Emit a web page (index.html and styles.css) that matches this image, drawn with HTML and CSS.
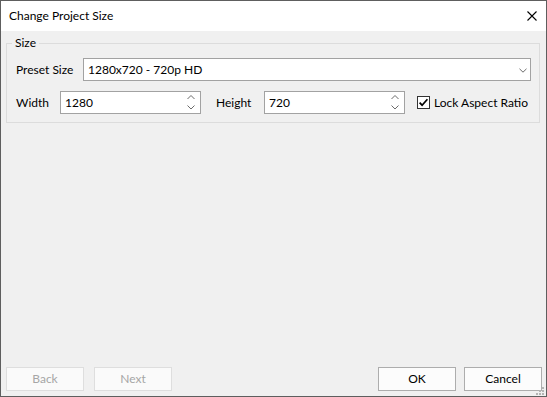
FILE: index.html
```html
<!DOCTYPE html>
<html lang="en">
<head>
<meta charset="utf-8">
<title>Change Project Size</title>
<link rel="stylesheet" href="styles.css">
</head>
<body>
<div class="window">
  <div class="titlebar">
    <span class="title">Change Project Size</span>
    <svg class="close" width="10" height="10" viewBox="0 0 10 10"><path d="M0.5 0.5 L9.5 9.5 M9.5 0.5 L0.5 9.5" stroke="#000" stroke-width="1.1" fill="none"/></svg>
  </div>
  <div class="content">
    <fieldset class="group">
      <legend class="legend">Size</legend>
      <div class="row">
        <span class="label label-preset">Preset Size</span>
        <div class="combo">
          <span class="field-text">1280x720 - 720p HD</span>
          <svg class="combo-arrow" width="8" height="5" viewBox="0 0 8 5"><path d="M0.5 0.8 L4 4.2 L7.5 0.8" stroke="#6b6b6b" stroke-width="1" fill="none"/></svg>
        </div>
      </div>
      <div class="row row-size">
        <span class="label label-width">Width</span>
        <div class="spin">
          <span class="field-text">1280</span>
          <svg class="spin-arrows" width="8" height="21" viewBox="0 0 8 21"><path d="M0.5 7 L4 3.5 L7.5 7 M0.5 13.5 L4 17 L7.5 13.5" stroke="#6b6b6b" stroke-width="1" fill="none"/></svg>
        </div>
        <span class="label label-height">Height</span>
        <div class="spin">
          <span class="field-text">720</span>
          <svg class="spin-arrows" width="8" height="21" viewBox="0 0 8 21"><path d="M0.5 7 L4 3.5 L7.5 7 M0.5 13.5 L4 17 L7.5 13.5" stroke="#6b6b6b" stroke-width="1" fill="none"/></svg>
        </div>
        <span class="checkbox">
          <svg width="11" height="11" viewBox="0 0 11 11"><path d="M1.6 5.6 L4.1 8.2 L9.4 2.2" stroke="#000" stroke-width="1.7" fill="none"/></svg>
        </span>
        <span class="check-label">Lock Aspect Ratio</span>
      </div>
    </fieldset>
    <div class="buttons">
      <div class="btn disabled">Back</div>
      <div class="btn disabled btn-next">Next</div>
      <div class="spacer"></div>
      <div class="btn">OK</div>
      <div class="btn btn-cancel">Cancel</div>
    </div>
    <svg class="grip" width="9" height="9" viewBox="0 0 9 9" fill="#b4b4b4">
      <rect x="6" y="0" width="2" height="2"/>
      <rect x="3" y="3" width="2" height="2"/><rect x="6" y="3" width="2" height="2"/>
      <rect x="0" y="6" width="2" height="2"/><rect x="3" y="6" width="2" height="2"/><rect x="6" y="6" width="2" height="2"/>
    </svg>
  </div>
</div>
</body>
</html>
```

FILE: styles.css
```css
* { box-sizing: border-box; }

html, body {
  margin: 0;
  padding: 0;
  background: #f0f0f0;
}

body {
  font-family: Lato, "Noto Sans", "Liberation Sans", sans-serif;
  font-size: 12px;
  color: #000;
}

.window {
  width: 547px;
  height: 397px;
  border: 1px solid #5e5e5e;
  display: flex;
  flex-direction: column;
  background: #f0f0f0;
}

.titlebar {
  height: 30px;
  flex: 0 0 30px;
  background: #fff;
  display: flex;
  align-items: center;
  justify-content: space-between;
  padding: 0 9px 0 8px;
}

.title {
  line-height: 16px;
}

.close {
  display: block;
}

.content {
  flex: 1;
  display: flex;
  flex-direction: column;
  position: relative;
}

.group {
  margin: 4px 6px 0 5px;
  border: 1px solid #dcdcdc;
  padding: 7px 8px 8px 9px;
  min-width: 0;
}

.legend {
  padding: 0 3px;
  margin-left: -4px;
  line-height: 16px;
}

.row {
  display: flex;
  align-items: center;
}

.row-size {
  margin-top: 10px;
}

.label {
  line-height: 16px;
  white-space: nowrap;
}

.label-preset { width: 67px; }
.label-width { width: 44px; }
.label-height { width: 48px; margin-left: 15px; }

.combo, .spin {
  height: 23px;
  border: 1px solid #a2a2a2;
  background: #fff;
  display: flex;
  align-items: center;
  padding-left: 4px;
}

.combo { flex: 1; }

.spin { width: 141px; }

.field-text {
  flex: 1;
  line-height: 16px;
  white-space: nowrap;
}

.combo-arrow {
  display: block;
  margin-right: 3px;
  margin-top: 1px;
}

.spin-arrows {
  display: block;
  margin-right: 5px;
}

.checkbox {
  width: 13px;
  height: 13px;
  border: 1px solid #333;
  background: #fff;
  margin-left: 12px;
  display: flex;
  align-items: center;
  justify-content: center;
}

.checkbox svg { display: block; }

.check-label {
  margin-left: 4px;
  line-height: 16px;
  white-space: nowrap;
}

.buttons {
  margin-top: auto;
  display: flex;
  padding: 0 4px 5px 5px;
}

.btn {
  width: 78px;
  height: 24px;
  border: 1px solid #adadad;
  background: #fcfcfc;
  display: flex;
  align-items: center;
  justify-content: center;
  line-height: 16px;
}

.btn.disabled {
  border-color: #dedede;
  background: #fafafa;
  color: #a6a6a6;
}

.btn-next { margin-left: 10px; }
.btn-cancel { margin-left: 8px; }

.spacer { flex: 1; }

.grip {
  position: absolute;
  right: 1px;
  bottom: 0;
  display: block;
}
```
